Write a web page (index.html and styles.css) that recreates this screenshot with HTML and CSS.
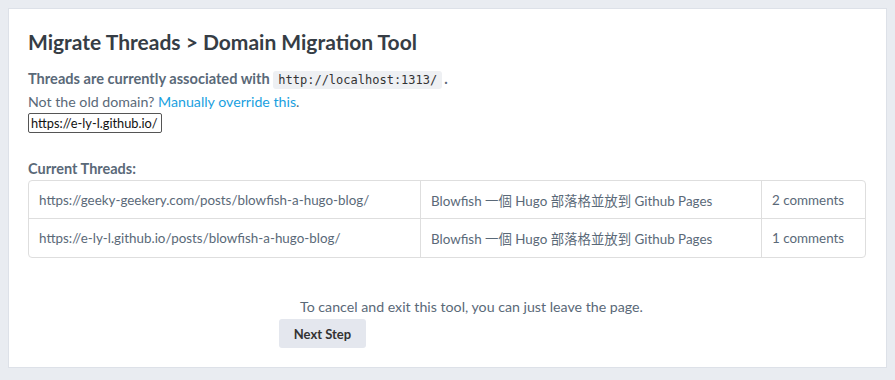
FILE: index.html
```html
<!DOCTYPE html>
<html lang="en">
<head>
    <meta charset="UTF-8">
    <meta name="viewport" content="width=device-width, initial-scale=1.0">
    <title>Domain Migration Tool</title>
    <link rel="stylesheet" href="styles.css">
</head>
<body>
    <div class="card">
        <h1>Migrate Threads &gt; Domain Migration Tool</h1>

        <p class="current">Threads are currently associated with <code>http://localhost:1313/</code>.</p>
        <p class="override">Not the old domain? <a href="#">Manually override this</a>.</p>
        <input type="text" class="domain-input" value="https://e-ly-l.github.io/">

        <h2>Current Threads:</h2>
        <table class="threads">
            <tr>
                <td class="url">https://geeky-geekery.com/posts/blowfish-a-hugo-blog/</td>
                <td class="title">Blowfish 一個 Hugo 部落格並放到 Github Pages</td>
                <td class="count">2 comments</td>
            </tr>
            <tr>
                <td class="url">https://e-ly-l.github.io/posts/blowfish-a-hugo-blog/</td>
                <td class="title">Blowfish 一個 Hugo 部落格並放到 Github Pages</td>
                <td class="count">1 comments</td>
            </tr>
        </table>

        <div class="footer">
            <p class="cancel">To cancel and exit this tool, you can just leave the page.</p>
            <button type="button">Next Step</button>
        </div>
    </div>
</body>
</html>
```

FILE: styles.css
```css
body {
    margin: 0;
    padding: 8px;
    background-color: #e9ecf1;
    font-family: Lato, "Noto Sans CJK TC", sans-serif;
    color: #5a6978;
}
.card {
    width: 838px;
    background-color: white;
    border: 1px solid #dde1e8;
    padding: 20px 20px 19px 19px;
}
h1 {
    margin: 0 0 13px;
    font-size: 21px;
    font-weight: bold;
    color: #363d45;
    line-height: 26px;
}
p {
    margin: 0;
    font-size: 14.2px;
    line-height: 22px;
}
.current {
    font-size: 14.6px;
    font-weight: bold;
}
code {
    font-family: "DejaVu Sans Mono", monospace;
    font-size: 12px;
    font-weight: normal;
    color: #333;
    background-color: #eef0f3;
    padding: 2px 5px;
    border-radius: 3px;
    margin-right: 2px;
}
a {
    color: #1a9fe0;
    text-decoration: none;
}
.domain-input {
    display: block;
    width: 134px;
    height: 20px;
    box-sizing: border-box;
    margin-top: 0;
    padding: 0 2px;
    border: 1px solid #555;
    border-radius: 2px;
    font-family: Lato, sans-serif;
    font-size: 12.8px;
    color: #111;
}
h2 {
    margin: 26px 0 1px;
    font-size: 14.5px;
    line-height: 20px;
    font-weight: bold;
}
.threads {
    width: 100%;
    table-layout: fixed;
    border-collapse: separate;
    border-spacing: 0;
    border: 1px solid #dedede;
    border-radius: 4px;
    font-size: 13.4px;
}
.threads td {
    height: 38px;
    box-sizing: border-box;
    padding: 0 10px;
    border-right: 1px solid #dedede;
    border-bottom: 1px solid #dedede;
    white-space: nowrap;
}
.threads tr:last-child td {
    border-bottom: none;
}
.threads td:last-child {
    border-right: none;
}
.threads .url {
    width: 392px;
}
.threads .title {
    width: 341px;
}
.footer {
    margin-top: 38px;
    padding-left: 251px;
}
.cancel {
    margin-left: 21px;
    line-height: 22px;
}
button {
    margin-top: 1px;
    width: 87px;
    height: 29px;
    background-color: #e4e7ee;
    border: none;
    border-radius: 3px;
    font-family: Lato, sans-serif;
    font-size: 13px;
    font-weight: bold;
    color: #333;
}
```
